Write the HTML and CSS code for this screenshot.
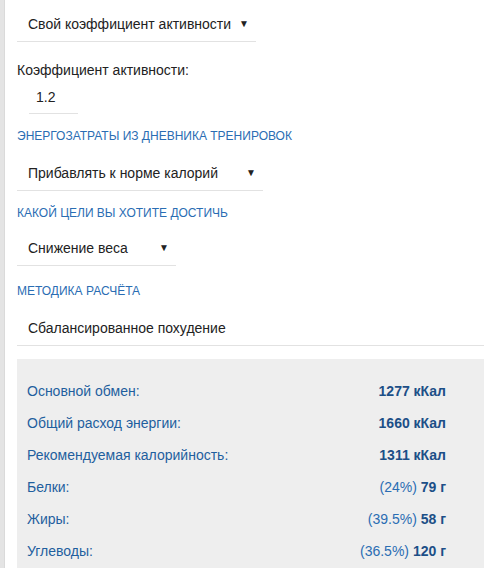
FILE: index.html
```html
<!DOCTYPE html>
<html lang="ru">
<head>
<meta charset="utf-8">
<link rel="stylesheet" href="styles.css">
</head>
<body>
<div class="page">
  <div class="strip"></div>
  <main class="main">
    <div class="select select-w1"><span>Свой коэффициент активности</span><span class="arrow">▼</span></div>
    <div class="field-label">Коэффициент активности:</div>
    <div class="input">1.2</div>
    <div class="section-label sl-1">Энергозатраты из дневника тренировок</div>
    <div class="select select-w2"><span>Прибавлять к норме калорий</span><span class="arrow">▼</span></div>
    <div class="section-label sl-2">Какой цели вы хотите достичь</div>
    <div class="select select-w3"><span>Снижение веса</span><span class="arrow">▼</span></div>
    <div class="section-label sl-3">Методика расчёта</div>
    <div class="select select-full"><span>Сбалансированное похудение</span></div>
    <div class="results">
      <div class="row"><span class="k">Основной обмен:</span><span class="v"><b>1277 кКал</b></span></div>
      <div class="row"><span class="k">Общий расход энергии:</span><span class="v"><b>1660 кКал</b></span></div>
      <div class="row"><span class="k">Рекомендуемая калорийность:</span><span class="v"><b>1311 кКал</b></span></div>
      <div class="row"><span class="k">Белки:</span><span class="v">(24%) <b>79 г</b></span></div>
      <div class="row"><span class="k">Жиры:</span><span class="v">(39.5%) <b>58 г</b></span></div>
      <div class="row"><span class="k">Углеводы:</span><span class="v">(36.5%) <b>120 г</b></span></div>
    </div>
  </main>
</div>
</body>
</html>
```
FILE: styles.css
```css
html, body {
  margin: 0;
  padding: 0;
  background: #fff;
}
body {
  font-family: "Liberation Sans", Arial, sans-serif;
  font-size: 14px;
  color: #333;
}
.page {
  display: flex;
  min-height: 568px;
}
.strip {
  width: 4px;
  background: #e4e4e4;
  border-right: 1px solid #dadada;
  flex: none;
}
.main {
  flex: 1;
  padding-left: 12px;
  padding-top: 7px;
  overflow: hidden;
}
.select {
  height: 34px;
  border-bottom: 1px solid #e2e2e2;
  display: flex;
  align-items: center;
  justify-content: space-between;
  padding: 0 7px 0 11px;
  box-sizing: content-box;
  color: #222;
}
.select-w1 { width: 221px; }
.select-w2 { width: 228px; }
.select-w3 { width: 141px; }
.select-full { width: auto; }
.arrow {
  font-size: 10px;
  color: #222;
  line-height: 1;
}
.field-label {
  margin-top: 18px;
  line-height: 20px;
  color: #222;
}
.input {
  margin-left: 12px;
  width: 42px;
  padding-left: 7px;
  height: 31px;
  line-height: 31px;
  border-bottom: 1px solid #e2e2e2;
  color: #222;
  margin-top: 2px;
}
.section-label {
  font-size: 12px;
  line-height: 16px;
  text-transform: uppercase;
  color: #2a6db3;
  margin-bottom: 12px;
}
.sl-1 { margin-top: 14px; }
.sl-2 { margin-top: 14px; margin-bottom: 10px; }
.sl-3 { margin-top: 17px; }
.results {
  margin-top: 13px;
  background: #eeeeee;
  padding: 16px 38px 10px 10px;
}
.row {
  display: flex;
  justify-content: space-between;
  height: 32px;
  line-height: 32px;
  color: #1f5f9e;
}
.v {
  color: #2a6db3;
}
.v b {
  color: #1c4f87;
  font-weight: bold;
}
```
